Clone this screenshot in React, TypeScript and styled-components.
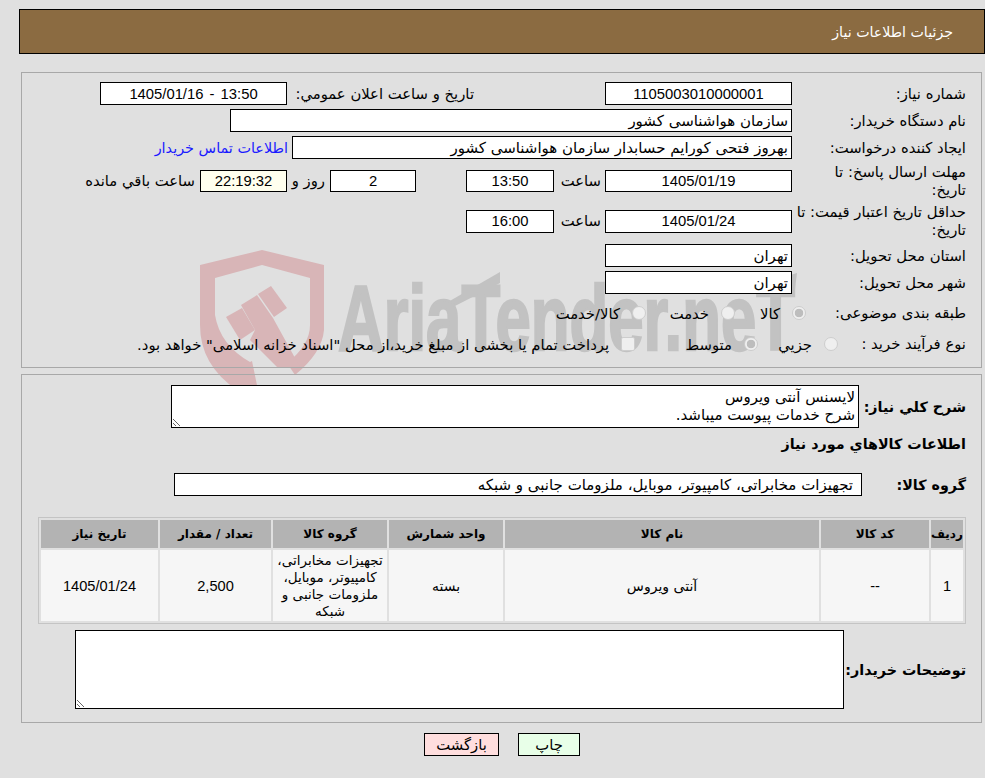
import React from 'react';
import styled, { createGlobalStyle } from 'styled-components';

const GlobalStyle = createGlobalStyle`
  html, body {
    margin: 0;
    padding: 0;
    background: #e0e0e0;
    overflow: hidden;
  }
  * {
    box-sizing: border-box;
  }
  body {
    font-family: 'DejaVu Sans', sans-serif;
    font-size: 14.8px;
    color: #000;
  }
`;

const items = [
  {
    row: '1',
    code: '--',
    name: 'آنتی ویروس',
    unit: 'بسته',
    group: 'تجهیزات مخابراتی، کامپیوتر، موبایل، ملزومات جانبی و شبکه',
    amount: '2,500',
    date: '1405/01/24',
  },
];

function App(): JSX.Element {
  return (
    <Page dir="rtl">
      <GlobalStyle />
      <Watermark viewBox="0 0 620 145" aria-hidden="true">
        <g fill="#d8b5b7">
          <path d="M5 20 L67 5 L129 20 L129 85 Q127 108 100 130 L92 118 Q115 100 115 80 L115 33 L67 20 L20 33 L20 70 Q25 100 55 117 L57 116 L63 145 L42 145 Q5 120 5 80 Z" />
          <path d="M31 72 L47 63 L60 85 L45 95 Z" />
          <path d="M46 60 L62 50 L78 73 L105 122 L82 122 L55 95 L60 85 Z" />
          <path d="M63 49 L76 41 L92 63 L79 72 Z" />
        </g>
        <g fill="#c2c2c2">
          <path d="M253 57 L305 27 L305 38 L258 62 Z" />
          <path d="M562 40 L602 28 L600 44 L565 50 Z" />
        </g>
        <WatermarkText x="143" y="105" textLength="457" lengthAdjust="spacingAndGlyphs">
          AriaTender.neT
        </WatermarkText>
      </Watermark>

      <Header>
        <HeaderTitle>جزئیات اطلاعات نیاز</HeaderTitle>
      </Header>

      <Panel>
        <Row>
          <Label>شماره نیاز:</Label>
          <Field $width={187} $center dir="ltr" readOnly value="1105003010000001" />
          <Label $width={187} $offset={131}>
            تاریخ و ساعت اعلان عمومي:
          </Label>
          <Field $width={187} $center dir="ltr" readOnly value="1405/01/16 - 13:50" />
        </Row>
        <Row>
          <Label>نام دستگاه خریدار:</Label>
          <Field $width={562} readOnly value="سازمان هواشناسی کشور" />
        </Row>
        <Row>
          <Label>ایجاد کننده درخواست:</Label>
          <Field $width={500} readOnly value="بهروز فتحی کورایم حسابدار سازمان هواشناسی کشور" />
          <ContactLink href="#">اطلاعات تماس خریدار</ContactLink>
        </Row>
        <DeadlineRow>
          <Label>
            مهلت ارسال پاسخ: تا
            <br />
            تاریخ:
          </Label>
          <ShortField $width={187} $center dir="ltr" readOnly value="1405/01/19" />
          <Label $width={51} $padRight={4}>ساعت</Label>
          <ShortField $width={88} $center dir="ltr" readOnly value="13:50" />
          <Spacer $width={50} />
          <ShortField $width={86} $center dir="ltr" readOnly value="2" />
          <Label $width={43} $padRight={5}>روز و</Label>
          <Timer $width={87} $center dir="ltr" readOnly value="22:19:32" />
          <Label $width={120} $padRight={5}>ساعت باقي مانده</Label>
        </DeadlineRow>
        <ValidityRow>
          <Label>
            حداقل تاریخ اعتبار قیمت: تا
            <br />
            تاریخ:
          </Label>
          <Field $width={187} $center dir="ltr" readOnly value="1405/01/24" />
          <Label $width={51} $padRight={4}>ساعت</Label>
          <Field $width={88} $center dir="ltr" readOnly value="16:00" />
        </ValidityRow>
        <Row>
          <Label>استان محل تحویل:</Label>
          <Field $width={187} readOnly value="تهران" />
        </Row>
        <Row>
          <Label>شهر محل تحویل:</Label>
          <Field $width={187} readOnly value="تهران" />
        </Row>
        <OptionRow>
          <Label $width={160}>طبقه بندی موضوعی:</Label>
          <Option $width={71}>
            <Radio $checked />
            کالا
          </Option>
          <Option $width={89}>
            <Radio />
            خدمت
          </Option>
          <Option $width={110}>
            <Radio />
            کالا/خدمت
          </Option>
        </OptionRow>
        <OptionRow>
          <Label $width={128}>نوع فرآیند خرید :</Label>
          <Option $width={80}>
            <Radio />
            جزيي
          </Option>
          <Option $width={123}>
            <Radio $checked />
            متوسط
          </Option>
          <Option>
            <Square />
            پرداخت تمام یا بخشی از مبلغ خرید،از محل "اسناد خزانه اسلامی" خواهد بود.
          </Option>
        </OptionRow>
      </Panel>

      <SecondPanel>
        <Row>
          <StrongLabel $width={107}>شرح كلي نیاز:</StrongLabel>
          <Notes
            $width={688}
            $height={43}
            readOnly
            value={'لایسنس آنتی ویروس\nشرح خدمات پیوست میباشد.'}
          />
        </Row>
        <SectionTitle>اطلاعات كالاهاي مورد نیاز</SectionTitle>
        <GroupRow>
          <StrongLabel $width={104}>گروه کالا:</StrongLabel>
          <GroupField readOnly value="تجهیزات مخابراتی، کامپیوتر، موبایل، ملزومات جانبی و شبکه" />
        </GroupRow>
        <ItemsTable>
          <colgroup>
            <col style={{ width: 32 }} />
            <col style={{ width: 108 }} />
            <col style={{ width: 314 }} />
            <col style={{ width: 114 }} />
            <col style={{ width: 114 }} />
            <col style={{ width: 111 }} />
            <col />
          </colgroup>
          <thead>
            <tr>
              <HeadCell>ردیف</HeadCell>
              <HeadCell>کد کالا</HeadCell>
              <HeadCell>نام کالا</HeadCell>
              <HeadCell>واحد شمارش</HeadCell>
              <HeadCell>گروه کالا</HeadCell>
              <HeadCell>تعداد / مقدار</HeadCell>
              <HeadCell>تاریخ نیاز</HeadCell>
            </tr>
          </thead>
          <tbody>
            {items.map((item) => (
              <tr key={item.row}>
                <Cell>{item.row}</Cell>
                <Cell>{item.code}</Cell>
                <TextCell>{item.name}</TextCell>
                <TextCell>{item.unit}</TextCell>
                <GroupCell>{item.group}</GroupCell>
                <Cell>{item.amount}</Cell>
                <Cell>{item.date}</Cell>
              </tr>
            ))}
          </tbody>
        </ItemsTable>
        <BuyerRow>
          <StrongLabel $width={122}>توضیحات خریدار:</StrongLabel>
          <Notes $width={769} $height={79} readOnly value="" />
        </BuyerRow>
      </SecondPanel>

      <Actions>
        <ActionButton $bg="#e8ffe8">چاپ</ActionButton>
        <ActionButton $bg="#ffdede" $wide>بازگشت</ActionButton>
      </Actions>
    </Page>
  );
}

const Page = styled.div`
  position: relative;
  width: 985px;
  height: 778px;
  padding-top: 9px;
  overflow: hidden;
`;

const Watermark = styled.svg`
  position: absolute;
  left: 195px;
  top: 245px;
  width: 620px;
  height: 145px;
`;

const WatermarkText = styled.text`
  font-family: 'Liberation Sans', sans-serif;
  font-weight: 700;
  font-size: 92px;
  fill: #c2c2c2;
  stroke: #c2c2c2;
  stroke-width: 2.5px;
  direction: ltr;
`;

const Header = styled.div`
  position: relative;
  width: 966px;
  height: 45px;
  margin-left: 19px;
  padding-right: 31px;
  display: flex;
  align-items: center;
  background: #8b6b41;
  border: 1px solid #000;
`;

const HeaderTitle = styled.div`
  color: #fff;
  font-size: 14.2px;
`;

const Panel = styled.div`
  position: relative;
  width: 961px;
  height: 296px;
  margin: 18px 3px 0 21px;
  padding: 9px 15px 0 0;
  border: 1px solid #a8a8a8;
`;

const SecondPanel = styled(Panel)`
  height: 349px;
  margin-top: 6px;
  padding-top: 10px;
`;

const Row = styled.div`
  display: flex;
  align-items: center;
  margin-bottom: 4px;
`;

const DeadlineRow = styled(Row)`
  height: 40px;
  margin-top: -2px;
  margin-bottom: 0;
`;

const ValidityRow = styled(Row)`
  height: 40px;
  margin-bottom: 3px;
`;

const OptionRow = styled(Row)`
  height: 30px;
  margin-bottom: 1px;
`;

const Label = styled.div<{ $width?: number; $offset?: number; $padRight?: number }>`
  flex: none;
  width: ${(p) => p.$width ?? 174}px;
  margin-right: ${(p) => p.$offset ?? 0}px;
  padding-right: ${(p) => p.$padRight ?? 0}px;
  line-height: 18px;
  white-space: nowrap;
`;

const StrongLabel = styled(Label)`
  font-size: 14.3px;
  font-weight: 700;
`;

const Field = styled.input<{ $width: number; $center?: boolean }>`
  flex: none;
  width: ${(p) => p.$width}px;
  height: 23px;
  padding: 0 3px;
  border: 1px solid #000;
  border-radius: 0;
  outline: none;
  background: #fff;
  color: #000;
  font-family: ${(p) => (p.$center ? "'Liberation Sans'" : "'DejaVu Sans'")}, sans-serif;
  font-size: ${(p) => (p.$center ? '14.8px' : '15px')};
  text-align: ${(p) => (p.$center ? 'center' : 'right')};
  word-spacing: ${(p) => (p.$center ? '2px' : '0')};
`;

const ShortField = styled(Field)`
  height: 22px;
`;

const Timer = styled(ShortField)`
  background: #ffffee;
`;

const Spacer = styled.div<{ $width: number }>`
  flex: none;
  width: ${(p) => p.$width}px;
`;

const ContactLink = styled.a`
  margin-right: 4px;
  color: #1a1aff;
  font-size: 14.4px;
  text-decoration: none;
`;

const Option = styled.label<{ $width?: number }>`
  flex: none;
  display: flex;
  align-items: center;
  width: ${(p) => (p.$width ? `${p.$width}px` : 'auto')};
`;

const Radio = styled.span<{ $checked?: boolean }>`
  flex: none;
  width: 14px;
  height: 14px;
  margin: 0 0 0 12px;
  border-radius: 50%;
  border: 1px solid #cdcdcd;
  background: ${(p) =>
    p.$checked ? 'radial-gradient(circle, #bdbdbd 0 4px, #efefef 4.6px)' : '#efefef'};
`;

const Square = styled.span`
  flex: none;
  width: 14px;
  height: 14px;
  margin: 0 0 0 12px;
  border-radius: 2px;
  border: 1px solid #cdcdcd;
  background: #efefef;
`;

const Notes = styled.textarea<{ $width: number; $height: number }>`
  display: block;
  flex: none;
  width: ${(p) => p.$width}px;
  height: ${(p) => p.$height}px;
  padding: 2px 3px;
  border: 1px solid #000;
  border-radius: 0;
  outline: none;
  background: #fff;
  color: #000;
  font-family: 'DejaVu Sans', sans-serif;
  font-size: 15px;
  line-height: 18px;
  overflow: hidden;
`;

const SectionTitle = styled.div`
  margin-top: 6px;
  font-size: 14.3px;
  font-weight: 700;
  line-height: 20px;
`;

const GroupRow = styled(Row)`
  margin-top: 19px;
  margin-bottom: 0;
`;

const GroupField = styled(Field).attrs({ $width: 688 })`
  padding-right: 8px;
`;

const ItemsTable = styled.table`
  width: 928px;
  margin-top: 21px;
  table-layout: fixed;
  border-collapse: separate;
  border-spacing: 2px;
  border: 1px solid #c4c4c4;
`;

const HeadCell = styled.th`
  height: 28px;
  padding: 0;
  background: #b3b3b3;
  font-size: 12px;
  font-weight: 700;
  text-align: center;
`;

const Cell = styled.td`
  height: 71px;
  padding: 0;
  background: #f6f6f6;
  text-align: center;
  font-family: 'Liberation Sans', sans-serif;
  font-size: 14.6px;
`;

const TextCell = styled(Cell)`
  font-family: 'DejaVu Sans', sans-serif;
  font-size: 14px;
`;

const GroupCell = styled(Cell)`
  padding: 0 3px;
  font-family: 'DejaVu Sans', sans-serif;
  font-size: 13.5px;
  line-height: 17px;
`;

const BuyerRow = styled(Row)`
  margin-top: 6px;
  margin-bottom: 0;
`;

const Actions = styled.div`
  display: flex;
  justify-content: center;
  gap: 19px;
  margin-top: 10px;
  padding-left: 19px;
`;

const ActionButton = styled.button<{ $bg: string; $wide?: boolean }>`
  width: ${(p) => (p.$wide ? 75 : 62)}px;
  height: 23px;
  padding: 0;
  border: 1px solid #000;
  border-radius: 0;
  background: ${(p) => p.$bg};
  color: #000;
  font-family: 'DejaVu Sans', sans-serif;
  font-size: 14.8px;
`;

export default App;
